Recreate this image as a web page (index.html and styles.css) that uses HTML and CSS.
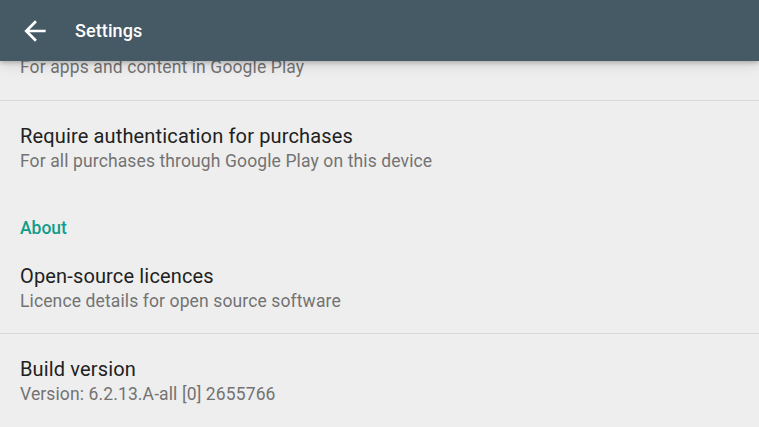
FILE: index.html
```html
<!DOCTYPE html>
<html lang="en">
<head>
<meta charset="utf-8">
<title>Settings</title>
<link rel="stylesheet" href="styles.css">
</head>
<body>
<div class="screen">
  <header class="appbar">
    <svg class="back" width="32" height="32" viewBox="0 0 24 24" aria-hidden="true">
      <path d="M20 11H7.83l5.59-5.59L12 4l-8 8 8 8 1.41-1.41L7.83 13H20v-2z" fill="#ffffff"/>
    </svg>
    <h1 class="title">Settings</h1>
  </header>
  <main class="list">
    <div class="item item-top">
      <div class="sub">For apps and content in Google Play</div>
    </div>
    <div class="item item-plain">
      <div class="name">Require authentication for purchases</div>
      <div class="sub">For all purchases through Google Play on this device</div>
    </div>
    <div class="section">About</div>
    <div class="item">
      <div class="name">Open-source licences</div>
      <div class="sub">Licence details for open source software</div>
    </div>
    <div class="item item-plain">
      <div class="name">Build version</div>
      <div class="sub">Version: 6.2.13.A-all [0] 2655766</div>
    </div>
  </main>
</div>
</body>
</html>
```
FILE: styles.css
```css
html, body {
  margin: 0;
  padding: 0;
  background: #eeeeee;
}
body {
  font-family: Roboto, "Noto Sans", sans-serif;
  overflow: hidden;
}
.screen {
  width: 759px;
  height: 427px;
  display: flex;
  flex-direction: column;
  overflow: hidden;
  background: #eeeeee;
}
.appbar {
  position: relative;
  z-index: 2;
  flex: 0 0 61px;
  height: 61px;
  background: #465a65;
  display: flex;
  align-items: center;
  box-shadow: 0 2px 4px rgba(0,0,0,0.20), 0 5px 12px rgba(0,0,0,0.10);
}
.back {
  margin-left: 19px;
  margin-top: 0;
}
.title {
  margin: 0 0 0 24px;
  font-size: 18px;
  font-weight: 500;
  color: #ffffff;
  line-height: 24px;
  letter-spacing: 0.1px;
}
.list {
  margin-top: -6px;
  display: flex;
  flex-direction: column;
}
.item {
  padding: 23px 20px 19px;
  border-bottom: 1px solid #d8d8d8;
}
.item-top {
  padding-top: 0;
  padding-bottom: 20px;
}
.item-plain {
  border-bottom: none;
}
.name {
  font-size: 20px;
  line-height: 25px;
  letter-spacing: 0.15px;
  color: #212121;
}
.sub {
  font-size: 17.5px;
  line-height: 25px;
  letter-spacing: 0.12px;
  color: #737373;
}
.section {
  padding: 23px 20px 0;
  font-size: 17.5px;
  line-height: 25px;
  font-weight: 500;
  color: #129c8a;
}
```
